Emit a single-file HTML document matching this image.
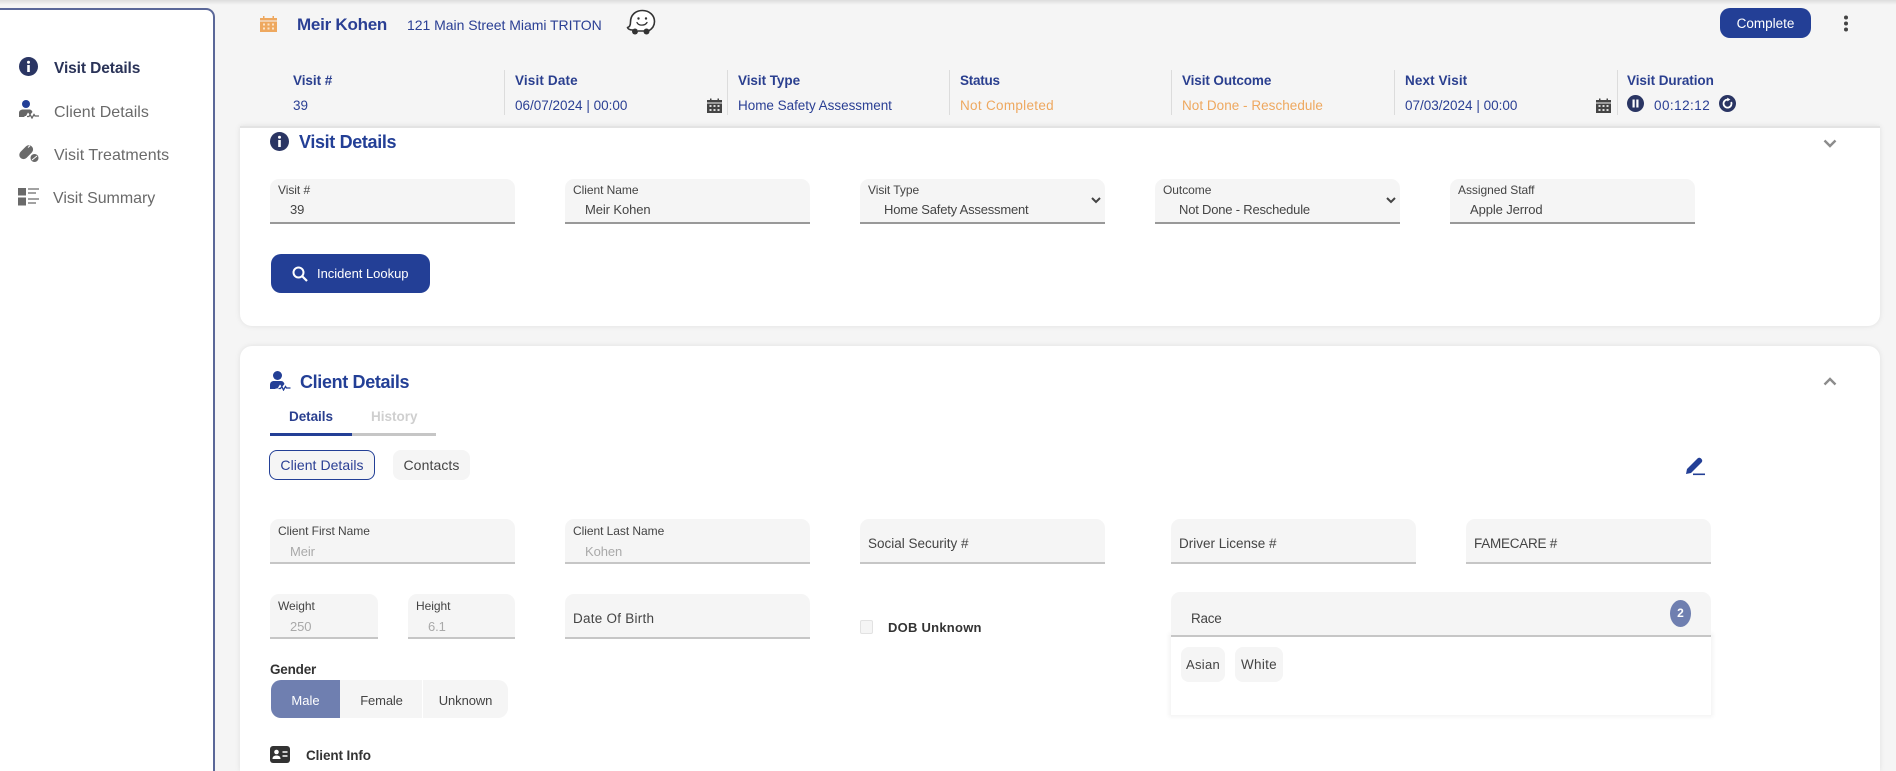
<!DOCTYPE html>
<html lang="en">
<head>
<meta charset="utf-8">
<title>Visit Details</title>
<style>
*{box-sizing:border-box}
html,body{margin:0;padding:0;width:1896px;height:771px;overflow:hidden;background:#f5f5f5;font-family:"Liberation Sans",Arial,sans-serif;color:#333}
#page{position:relative;width:1896px;height:771px;overflow:hidden;background:#f5f5f5}
.t{position:absolute;line-height:20px;white-space:nowrap;font-size:13.5px;letter-spacing:-.1px}
.a{position:absolute}
.topshade{position:absolute;left:0;top:0;width:1896px;height:5px;background:linear-gradient(#dcdcdc,#f5f5f5)}
.side{position:absolute;left:-4px;top:8px;width:219px;height:763px;background:#fff;border:2px solid #5a6798;border-bottom:0;border-radius:0 9px 0 0}
.hdr-sep{position:absolute;top:70px;width:1px;height:45px;background:#dcdcdc}
.lbl{color:#2a3f8f;font-weight:bold;font-size:13.5px;letter-spacing:-.05px}
.val{color:#2a3f94;font-size:13.5px;letter-spacing:0}
.org{color:#eea85f}
.card{position:absolute;background:#fff;left:240px;width:1640px;box-shadow:0 0 6px rgba(0,0,0,.09)}
.f{position:absolute;height:45px;background:#f5f5f5;border-radius:9px 9px 0 0;border-bottom:2px solid #999}
.f.g{border-bottom-color:#c6c6c6}
.l{position:absolute;left:8px;top:1px;line-height:20px;font-size:12px;color:#444;letter-spacing:-.05px;white-space:nowrap}
.v{position:absolute;left:20px;top:21px;line-height:20px;font-size:13px;color:#444;letter-spacing:-.1px;white-space:nowrap}
.g .l{top:2px}
.g .v{top:23px}
.v.d{color:#a9a9a9}
.p{position:absolute;left:8px;top:15px;line-height:20px;font-size:13.5px;color:#444;letter-spacing:0;white-space:nowrap}
.title{color:#233f96;font-size:18px;font-weight:bold;letter-spacing:-.35px}
.nav{font-size:16px;color:#6a6a6a;letter-spacing:.05px}
.btn{position:absolute;background:#233f96;color:#fff;text-align:center}
.chip{position:absolute;background:#f5f5f5;border-radius:8px;text-align:center;font-size:13.5px;color:#444;letter-spacing:.15px}
</style>
</head>
<body>
<div id="page">
<div class="topshade"></div>

<!-- Sidebar -->
<div class="side"></div>
<svg class="a" style="left:19px;top:57px" width="19" height="19" viewBox="0 0 19 19"><circle cx="9.5" cy="9.5" r="9.5" fill="#2a3563"/><rect x="8.2" y="8" width="2.6" height="7" fill="#fff"/><circle cx="9.5" cy="5.2" r="1.5" fill="#fff"/></svg>
<div class="t" style="left:54px;top:59px;font-size:15.5px;font-weight:bold;color:#2a3358;letter-spacing:-.1px">Visit Details</div>
<svg class="a" style="left:19px;top:100px" width="21" height="19" viewBox="0 0 21 19"><circle cx="7" cy="4" r="4" fill="#233f96"/><path d="M0 17V13C0 10.500 2 9.500 4 9.500H10C12 9.500 13 10.500 13.500 12L11 15 9 12.500 7 16H5.500V17Z" fill="#666"/><path d="M8 16.500H10L11 14.500 13 18 15 14.500 16 16H20" fill="none" stroke="#666" stroke-width="1.300"/></svg>
<div class="t nav" style="left:54px;top:103px">Client Details</div>
<svg class="a" style="left:19px;top:143px" width="20" height="20" viewBox="0 0 20 20"><g transform="rotate(-45 7 9)"><rect x="-1" y="5" width="16" height="8.500" rx="4.250" fill="#6a6a6a"/></g><circle cx="15.500" cy="15" r="4" fill="#6a6a6a"/><path d="M13 17 18 13" stroke="#fff" stroke-width="1"/><path d="M9 4.500 11 2.800" stroke="#fff" stroke-width="1"/></svg>
<div class="t nav" style="left:54px;top:146px">Visit Treatments</div>
<svg class="a" style="left:18px;top:188px" width="21" height="18" viewBox="0 0 21 18"><rect width="8" height="7.500" fill="#6a6a6a"/><rect y="9.500" width="8" height="8" fill="#6a6a6a"/><path d="M10 1H21M10 5H18M10 11H21M10 15H18" stroke="#6a6a6a" stroke-width="1.300"/></svg>
<div class="t nav" style="left:53px;top:189px;letter-spacing:-.05px">Visit Summary</div>

<!-- Header row -->
<svg class="a" style="left:260px;top:15px" width="17" height="17" viewBox="0 0 17 17"><path d="M0 3H3V1H4.500V3H12.500V1H14V3H17V5.500H0ZM0 6.500H17V17H0Z" fill="#eea85f"/><g fill="#fbe3c8"><rect x="3" y="8.500" width="2" height="2"/><rect x="7.500" y="8.500" width="2" height="2"/><rect x="12" y="8.500" width="2" height="2"/><rect x="3" y="12.500" width="2" height="2"/><rect x="7.500" y="12.500" width="2" height="2"/><rect x="12" y="12.500" width="2" height="2"/></g></svg>
<div class="t" style="left:297px;top:15px;font-size:17px;font-weight:bold;color:#2a3f94;letter-spacing:-.25px">Meir Kohen</div>
<div class="t" style="left:407px;top:15px;font-size:14px;color:#2a3f94;letter-spacing:-.03px">121 Main Street Miami TRITON</div>
<svg class="a" style="left:626px;top:9px" width="30" height="27" viewBox="0 0 30 27"><path d="M7 21C4 21 2 20 1.500 18.500 4 18 4.500 16 4.500 13 4.500 6 9.500 1.500 16.500 1.500 23.500 1.500 28.500 6.500 28.500 12.500 28.500 17 26 20 22.500 22H12" fill="#fff" stroke="#333" stroke-width="1.600" stroke-linejoin="round"/><circle cx="9" cy="22.500" r="3" fill="#333"/><circle cx="20.500" cy="22.500" r="3" fill="#333"/><circle cx="12.500" cy="9.500" r="1.200" fill="#333"/><circle cx="20" cy="9.500" r="1.200" fill="#333"/><path d="M11 13.500C12.500 17 19 17 21 13.500" fill="none" stroke="#333" stroke-width="1.300" stroke-linecap="round"/></svg>
<div class="btn t" style="left:1720px;top:8px;width:91px;height:30px;line-height:31px;border-radius:10px;font-size:13.5px;letter-spacing:0">Complete</div>
<svg class="a" style="left:1843px;top:15px" width="6" height="17" viewBox="0 0 6 17"><circle cx="3" cy="2.500" r="2" fill="#444"/><circle cx="3" cy="8.500" r="2" fill="#444"/><circle cx="3" cy="14.500" r="2" fill="#444"/></svg>

<!-- Summary row -->
<div class="t lbl" style="left:293px;top:71px">Visit #</div>
<div class="t val" style="left:293px;top:96px">39</div>
<div class="hdr-sep" style="left:504px"></div>
<div class="t lbl" style="left:515px;top:71px;letter-spacing:.15px">Visit Date</div>
<div class="t val" style="left:515px;top:96px">06/07/2024 | 00:00</div>
<svg class="a" style="left:707px;top:98px" width="15" height="15" viewBox="0 0 15 15"><path d="M0 2H3V.500H4.500V2H10.500V.500H12V2H15V4.500H0ZM0 5.500H15V15H0Z" fill="#444"/><g fill="#ddd"><rect x="2.500" y="7" width="2" height="2"/><rect x="6.500" y="7" width="2" height="2"/><rect x="10.500" y="7" width="2" height="2"/><rect x="2.500" y="11" width="2" height="2"/><rect x="6.500" y="11" width="2" height="2"/><rect x="10.500" y="11" width="2" height="2"/></g></svg>
<div class="hdr-sep" style="left:727px"></div>
<div class="t lbl" style="left:738px;top:71px">Visit Type</div>
<div class="t val" style="left:738px;top:96px;letter-spacing:-.03px">Home Safety Assessment</div>
<div class="hdr-sep" style="left:949px"></div>
<div class="t lbl" style="left:960px;top:71px;letter-spacing:-.25px">Status</div>
<div class="t val org" style="left:960px;top:96px;letter-spacing:.3px">Not Completed</div>
<div class="hdr-sep" style="left:1171px"></div>
<div class="t lbl" style="left:1182px;top:71px;letter-spacing:-.1px">Visit Outcome</div>
<div class="t val org" style="left:1182px;top:96px;letter-spacing:.03px">Not Done - Reschedule</div>
<div class="hdr-sep" style="left:1394px"></div>
<div class="t lbl" style="left:1405px;top:71px;letter-spacing:.1px">Next Visit</div>
<div class="t val" style="left:1405px;top:96px">07/03/2024 | 00:00</div>
<svg class="a" style="left:1596px;top:98px" width="15" height="15" viewBox="0 0 15 15"><path d="M0 2H3V.500H4.500V2H10.500V.500H12V2H15V4.500H0ZM0 5.500H15V15H0Z" fill="#444"/><g fill="#ddd"><rect x="2.500" y="7" width="2" height="2"/><rect x="6.500" y="7" width="2" height="2"/><rect x="10.500" y="7" width="2" height="2"/><rect x="2.500" y="11" width="2" height="2"/><rect x="6.500" y="11" width="2" height="2"/><rect x="10.500" y="11" width="2" height="2"/></g></svg>
<div class="hdr-sep" style="left:1617px"></div>
<div class="t lbl" style="left:1627px;top:71px">Visit Duration</div>
<svg class="a" style="left:1627px;top:95px" width="17" height="17" viewBox="0 0 17 17"><circle cx="8.500" cy="8.500" r="8.500" fill="#2a3563"/><rect x="5.500" y="4.500" width="2.200" height="8" fill="#fff"/><rect x="9.300" y="4.500" width="2.200" height="8" fill="#fff"/></svg>
<div class="t val" style="left:1654px;top:96px;letter-spacing:.45px">00:12:12</div>
<svg class="a" style="left:1719px;top:95px" width="17" height="17" viewBox="0 0 17 17"><circle cx="8.500" cy="8.500" r="8.500" fill="#2a3563"/><path d="M12.200 7A4 4 0 1 1 8.500 4.600" fill="none" stroke="#fff" stroke-width="1.800"/><path d="M8.200 2.600 11.400 4.500 8.400 6.400Z" fill="#fff"/></svg>

<!-- Card 1 -->
<div class="card" style="top:126px;height:200px;border-radius:0 0 12px 12px;border-top:2px solid #e3e3e3"></div>
<svg class="a" style="left:270px;top:132px" width="19" height="19" viewBox="0 0 19 19"><circle cx="9.500" cy="9.500" r="9.500" fill="#2a3563"/><rect x="8.200" y="8" width="2.600" height="7" fill="#fff"/><circle cx="9.500" cy="5.200" r="1.500" fill="#fff"/></svg>
<div class="t title" style="left:299px;top:132px">Visit Details</div>
<svg class="a" style="left:1823px;top:139px" width="14" height="9" viewBox="0 0 14 9"><path d="M1.500 1.500 7 7 12.500 1.500" fill="none" stroke="#8c8c8c" stroke-width="2.400"/></svg>

<div class="f" style="left:270px;top:179px;width:245px"><div class="l">Visit #</div><div class="v">39</div></div>
<div class="f" style="left:565px;top:179px;width:245px"><div class="l">Client Name</div><div class="v">Meir Kohen</div></div>
<div class="f" style="left:860px;top:179px;width:245px"><div class="l">Visit Type</div><div class="v" style="left:24px;letter-spacing:-.2px">Home Safety Assessment</div><svg class="a" style="left:231px;top:18px" width="10" height="7" viewBox="0 0 10 7"><path d="M1 1 5 5 9 1" fill="none" stroke="#444" stroke-width="2"/></svg></div>
<div class="f" style="left:1155px;top:179px;width:245px"><div class="l">Outcome</div><div class="v" style="left:24px;letter-spacing:-.2px">Not Done - Reschedule</div><svg class="a" style="left:231px;top:18px" width="10" height="7" viewBox="0 0 10 7"><path d="M1 1 5 5 9 1" fill="none" stroke="#444" stroke-width="2"/></svg></div>
<div class="f" style="left:1450px;top:179px;width:245px"><div class="l">Assigned Staff</div><div class="v">Apple Jerrod</div></div>

<div class="btn" style="left:271px;top:254px;width:159px;height:39px;border-radius:10px"></div>
<svg class="a" style="left:292px;top:266px" width="16" height="16" viewBox="0 0 16 16"><circle cx="6.500" cy="6.500" r="5" fill="none" stroke="#fff" stroke-width="2"/><path d="M10.500 10.500 15 15" stroke="#fff" stroke-width="2.200"/></svg>
<div class="t" style="left:317px;top:264px;color:#fff;font-size:13px;letter-spacing:-.02px">Incident Lookup</div>

<!-- Card 2 -->
<div class="card" style="top:346px;height:425px;border-radius:12px 12px 0 0"></div>
<svg class="a" style="left:270px;top:371px" width="21" height="20" viewBox="0 0 21 20"><circle cx="7.500" cy="4.500" r="4.500" fill="#233f96"/><path d="M0 18V14C0 11 2 10 4 10H11C13 10 14 11.500 14.500 13L12 16 10 13.500 7.500 17.500H5.500V18Z" fill="#233f96"/><path d="M8.500 17.500H10.500L11.800 15.500 13.500 19 15.500 15.500 16.500 17H20.500" fill="none" stroke="#233f96" stroke-width="1.300"/></svg>
<div class="t title" style="left:300px;top:372px">Client Details</div>
<svg class="a" style="left:1823px;top:377px" width="14" height="9" viewBox="0 0 14 9"><path d="M1.500 7.500 7 2 12.500 7.500" fill="none" stroke="#8c8c8c" stroke-width="2.400"/></svg>

<div class="t" style="left:289px;top:407px;font-size:13.5px;font-weight:bold;color:#2a3f8f;letter-spacing:-.05px">Details</div>
<div class="t" style="left:371px;top:407px;font-size:13.5px;font-weight:bold;color:#cfcfcf;letter-spacing:0">History</div>
<div class="a" style="left:270px;top:433px;width:82px;height:3px;background:#233f96"></div>
<div class="a" style="left:352px;top:433px;width:84px;height:3px;background:#c6c6c6"></div>

<div class="chip" style="left:269px;top:450px;width:106px;height:30px;line-height:29px;border:1px solid #233f96;color:#2a3f94;font-size:14px;letter-spacing:.05px">Client Details</div>
<div class="chip" style="left:393px;top:450px;width:77px;height:30px;line-height:31px;font-size:14px;letter-spacing:.1px">Contacts</div>
<svg class="a" style="left:1685px;top:456px" width="21" height="20" viewBox="0 0 21 20"><path d="M1 18 2 13 12.500 2.500C13.500 1.500 15 1.500 16 2.500L16.500 3C17.500 4 17.500 5.500 16.500 6.500L6 17Z" fill="#233f96"/><rect x="8" y="17.500" width="12" height="1.600" fill="#233f96"/></svg>

<div class="f g" style="left:270px;top:519px;width:245px"><div class="l">Client First Name</div><div class="v d">Meir</div></div>
<div class="f g" style="left:565px;top:519px;width:245px"><div class="l">Client Last Name</div><div class="v d">Kohen</div></div>
<div class="f g" style="left:860px;top:519px;width:245px"><div class="p">Social Security #</div></div>
<div class="f g" style="left:1171px;top:519px;width:245px"><div class="p">Driver License #</div></div>
<div class="f g" style="left:1466px;top:519px;width:245px"><div class="p" style="letter-spacing:-.25px">FAMECARE #</div></div>

<div class="f g" style="left:270px;top:594px;width:108px"><div class="l">Weight</div><div class="v d">250</div></div>
<div class="f g" style="left:408px;top:594px;width:107px"><div class="l">Height</div><div class="v d">6.1</div></div>
<div class="f g" style="left:565px;top:594px;width:245px"><div class="p" style="letter-spacing:.25px">Date Of Birth</div></div>

<div class="a" style="left:860px;top:620px;width:13px;height:14px;background:#f5f5f5;border:1px solid #e2e2e2;border-radius:2px"></div>
<div class="t" style="left:888px;top:618px;font-weight:bold;font-size:13px;color:#333;letter-spacing:.25px">DOB Unknown</div>

<div class="a" style="left:1171px;top:635px;width:540px;height:80px;background:#fff;box-shadow:0 0 4px 2px rgba(0,0,0,.05)"></div>
<div class="f g" style="left:1171px;top:592px;width:540px;height:45px"><div class="p" style="left:20px;top:17px;letter-spacing:-.25px">Race</div>
<div class="a" style="left:499px;top:8px;width:21px;height:27px;border-radius:50%;background:#6f7fb0;color:#fff;font-size:12px;font-weight:bold;line-height:26px;text-align:center">2</div></div>
<div class="chip" style="left:1181px;top:647px;width:44px;height:35px;line-height:36px;font-size:13px;letter-spacing:.3px">Asian</div>
<div class="chip" style="left:1235px;top:647px;width:48px;height:35px;line-height:36px;letter-spacing:.3px">White</div>

<div class="t" style="left:270px;top:660px;font-weight:bold;font-size:13.5px;color:#333;letter-spacing:-.2px">Gender</div>
<div class="a" style="left:271px;top:680px;width:237px;height:38px;background:#f5f5f5;border-radius:10px"></div>
<div class="a" style="left:271px;top:680px;width:69px;height:38px;background:#6f7fb0;border-radius:10px 0 0 10px;color:#fff;text-align:center;line-height:41px;font-size:13px">Male</div>
<div class="a" style="left:341px;top:680px;width:81px;height:38px;color:#444;text-align:center;line-height:41px;font-size:13px;letter-spacing:-.15px">Female</div>
<div class="a" style="left:422px;top:680px;width:1px;height:38px;background:#fff"></div>
<div class="a" style="left:423px;top:680px;width:85px;height:38px;color:#444;text-align:center;line-height:41px;font-size:13px;letter-spacing:-.1px">Unknown</div>

<svg class="a" style="left:270px;top:746px" width="20" height="17" viewBox="0 0 20 17"><rect width="20" height="17" rx="3" fill="#333"/><circle cx="6.500" cy="6" r="2.300" fill="#fff"/><path d="M2.500 13C2.500 10.500 4 9.500 6.500 9.500S10.500 10.500 10.500 13Z" fill="#fff"/><path d="M12.500 6H17.500M12.500 10H17.500" stroke="#fff" stroke-width="1.500"/></svg>
<div class="t" style="left:306px;top:746px;font-weight:bold;font-size:13.5px;color:#333;letter-spacing:-.1px">Client Info</div>
</div>
</body>
</html>
